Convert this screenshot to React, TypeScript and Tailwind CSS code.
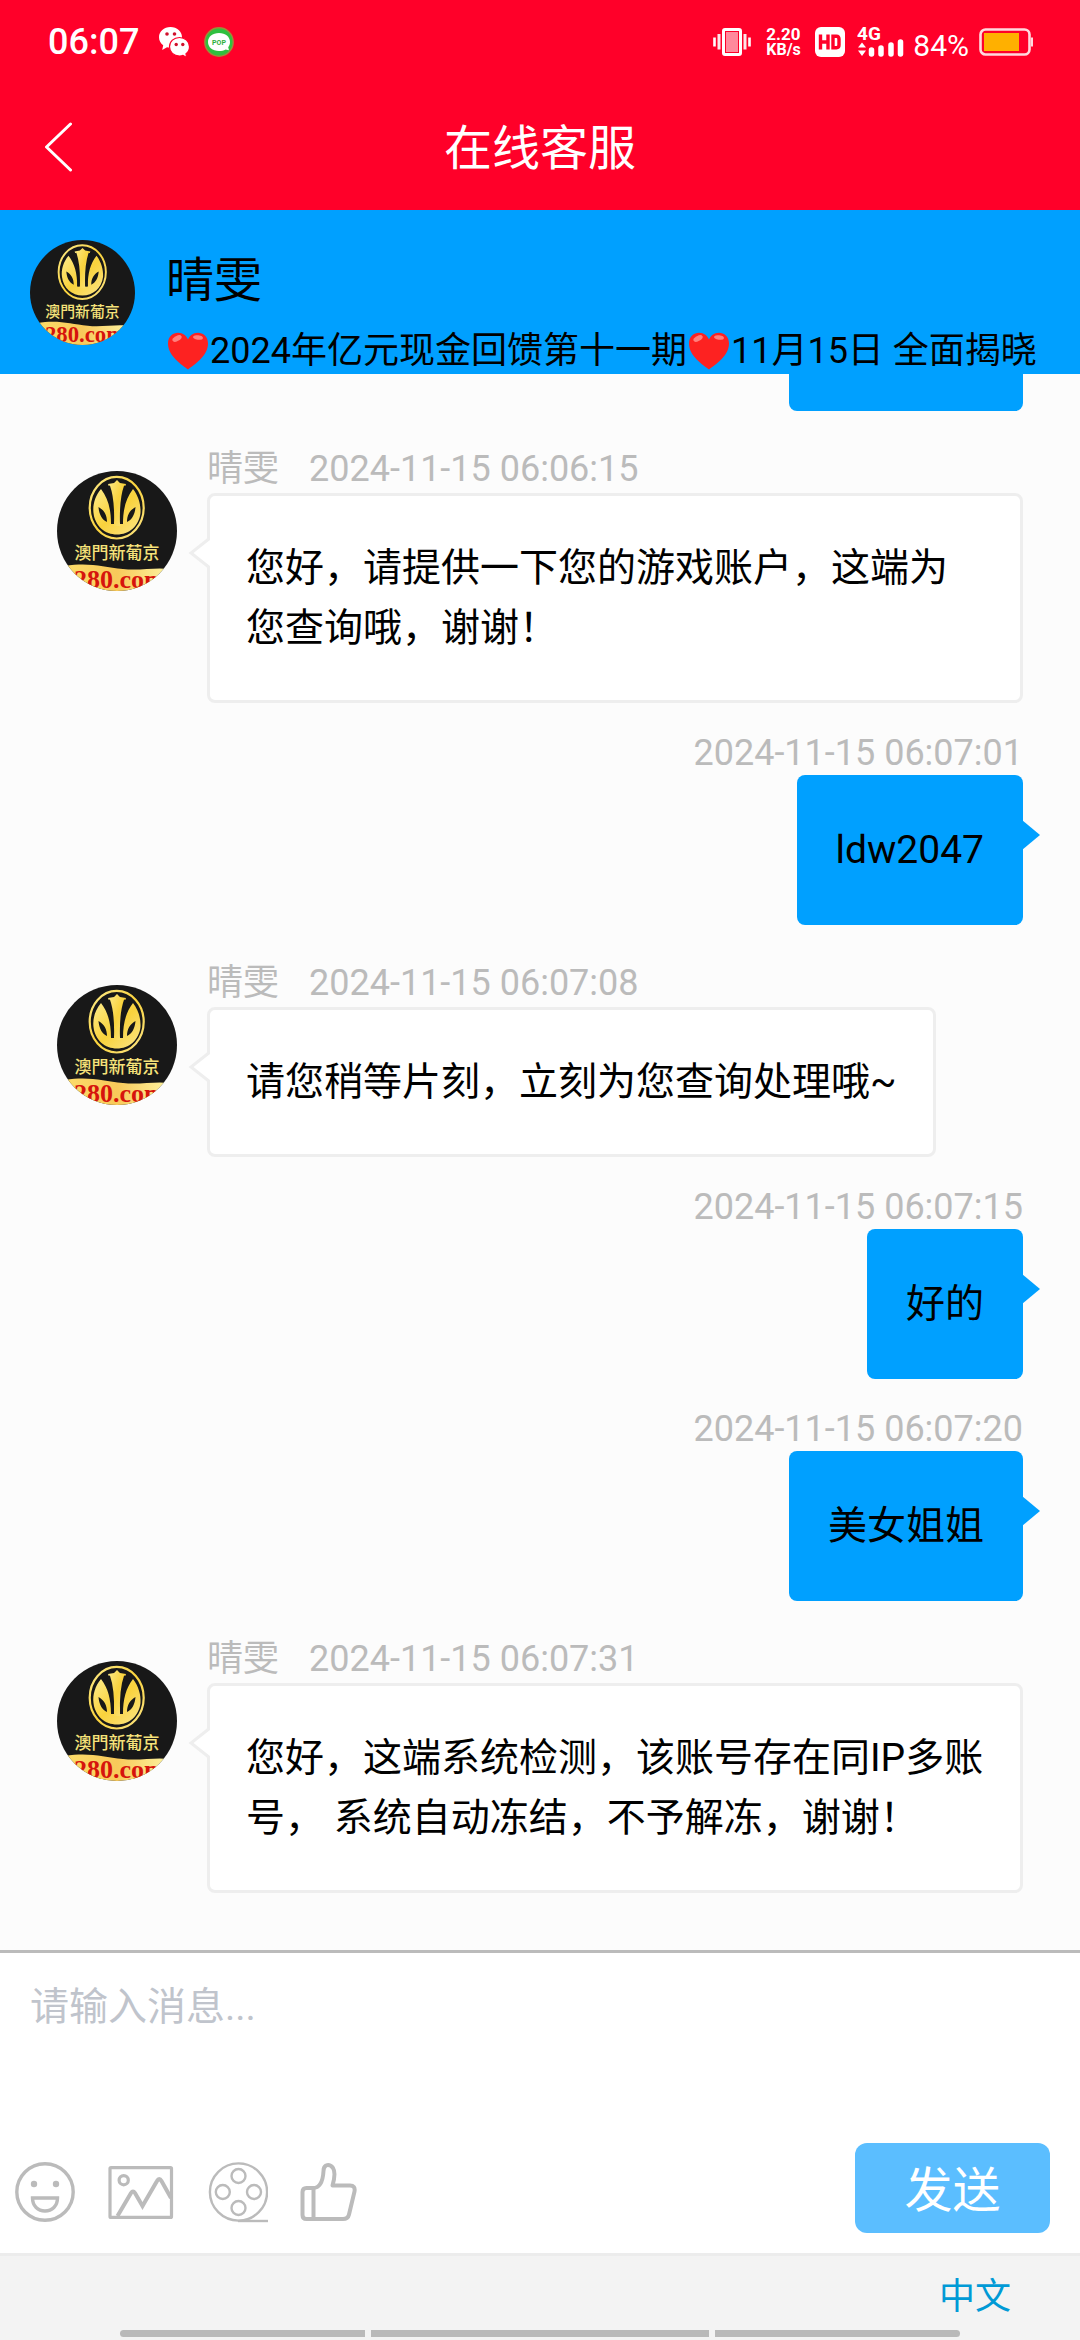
import { useState } from 'react';

type Message = {
  id: number;
  from: 'agent' | 'user';
  time: string;
  text: string;
};

const AGENT_NAME = '晴雯';

const messages: Message[] = [
  { id: 1, from: 'agent', time: '2024-11-15 06:06:15', text: '您好，请提供一下您的游戏账户，这端为您查询哦，谢谢！' },
  { id: 2, from: 'user', time: '2024-11-15 06:07:01', text: 'ldw2047' },
  { id: 3, from: 'agent', time: '2024-11-15 06:07:08', text: '请您稍等片刻，立刻为您查询处理哦~' },
  { id: 4, from: 'user', time: '2024-11-15 06:07:15', text: '好的' },
  { id: 5, from: 'user', time: '2024-11-15 06:07:20', text: '美女姐姐' },
  { id: 6, from: 'agent', time: '2024-11-15 06:07:31', text: '您好，这端系统检测，该账号存在同IP多账号， 系统自动冻结，不予解冻，谢谢！' },
];

function Avatar({ className }: { className: string }) {
  return (
    <svg viewBox="0 0 120 120" className={`shrink-0 rounded-full ${className}`} role="img" aria-label={AGENT_NAME}>
      <defs>
        <linearGradient id="gold" x1="0" y1="0" x2="1" y2="1">
          <stop offset="0" stopColor="#fdeb8a" />
          <stop offset="0.5" stopColor="#f9d23c" />
          <stop offset="1" stopColor="#fbe587" />
        </linearGradient>
        <linearGradient id="band" x1="0" y1="0" x2="1" y2="0">
          <stop offset="0" stopColor="#fbdc6a" />
          <stop offset="0.5" stopColor="#f8c95a" />
          <stop offset="1" stopColor="#fdf3a0" />
        </linearGradient>
      </defs>
      <rect width="120" height="120" fill="#181818" />
      <ellipse cx="59.7" cy="36.7" rx="27" ry="30.8" fill="none" stroke="url(#gold)" strokeWidth="2.2" />
      {/* tulip: two outer petals joined at the bowl, one in the middle */}
      <path
        d="M44 18 C38 25 35.5 34 36.5 42 C38 55 48 63.5 60 63.5 C72 63.5 82 55 83.5 42 C84 34 81.5 25 76 18 C69 27 66 38 66 53 L54 53 C54 38 51 27 44 18Z"
        fill="url(#gold)"
      />
      <path d="M60 9 L63 12 L69 13 C65 23 63.5 35 63.5 55 L56.5 55 C56.5 35 55 23 51 13 L57 12Z" fill="url(#gold)" />
      <path d="M51.500 15 C55.500 26 56 38 55.500 53 M68.500 15 C64.500 26 64 38 64.500 53" fill="none" stroke="#181818" strokeWidth="3" />
      <path d="M41.5 36 C47 39 50 44 50 51 C45 49 42 43 41.5 36Z M78.5 36 C73 39 70 44 70 51 C75 49 78 43 78.5 36Z" fill="#181818" />
      <text x="60" y="88" textAnchor="middle" fontSize="17" fontWeight="500" fill="#f5e27a" fontFamily="'Noto Sans CJK TC', sans-serif">
        澳門新葡京
      </text>
      <path d="M8 95 C32 91 46 96 66 98 C82 100 98 96 112 98 L112 120 L8 120Z" fill="url(#band)" />
      <text x="17" y="117" fontSize="26" fontWeight="700" fill="#d6140c" fontFamily="'Liberation Serif', serif">
        280.com
      </text>
    </svg>
  );
}

function Heart() {
  return (
    <svg viewBox="0 0 42 38" className="h-[38px] w-11 shrink-0" role="img" aria-label="❤️">
      <path
        d="M21 37.5 C15 33 1 24 1 11.5 C1 4.5 6 .8 11 .8 C16 .8 19.5 4 21 7.5 C22.500 4 26 .8 31 .8 C36 .8 41 4.500 41 11.500 C41 24 27 33 21 37.500Z"
        fill="#fd2221"
      />
      <ellipse cx="10" cy="6.500" rx="5" ry="2.600" fill="#ff7f7c" transform="rotate(-28 10 6.500)" />
      <ellipse cx="31" cy="5.500" rx="5" ry="2.200" fill="#ff7f7c" transform="rotate(8 31 5.500)" />
    </svg>
  );
}

function StatusBar() {
  return (
    <div className="flex h-[84px] items-center pl-12 pr-[47px] text-white">
      <span className="text-[36px] leading-none font-medium">06:07</span>
      {/* WeChat */}
      <svg viewBox="0 0 31 31" className="ml-5 size-[31px]" aria-hidden="true">
        <path d="M11.500 0 C5 0 0 4.500 0 10.200 C0 13.500 1.700 16.300 4.200 18.200 L3.200 23 L8 20.200 C9.500 20.600 11 20.500 11.500 20.400 C18 20 23 16 23 10.200 C23 4.500 18 0 11.500 0Z" fill="#fff" />
        <path d="M20.500 10.500 C14.800 10.500 10.500 14.500 10.500 19.800 C10.500 25 14.800 29 20.500 29 C21.800 29 23 28.800 24 28.400 L27.500 30.500 L27 26.800 C29.200 25.200 30.500 22.600 30.500 19.800 C30.500 14.500 26 10.500 20.500 10.500Z" fill="#fff" stroke="#ff0029" strokeWidth="1.200" />
        <circle cx="8" cy="7" r="1.800" fill="#d0102c" />
        <circle cx="15.500" cy="7" r="1.800" fill="#d0102c" />
        <circle cx="17.200" cy="17.500" r="1.700" fill="#d0102c" />
        <circle cx="23.800" cy="17.500" r="1.700" fill="#d0102c" />
      </svg>
      <svg viewBox="0 0 30 30" className="ml-3.5 size-[30px]" aria-label="POP">
        <circle cx="15" cy="15" r="14.200" fill="#2fc03f" stroke="#a08a3a" strokeWidth="1.400" />
        <path d="M15 6 C8.500 6 4 9.800 4 15 C4 20.200 8.500 24 15 24 C17.500 24 19.800 23.400 21.600 22.400 L25 23.200 L24.200 20.200 C25.400 18.700 26 17 26 15 C26 9.800 21.500 6 15 6Z" fill="#fff" />
        <text x="15" y="17.600" textAnchor="middle" fontSize="7" fontWeight="700" fill="#2fb03c">
          POP
        </text>
      </svg>
      <div className="ml-auto flex items-center">
        <svg viewBox="0 0 38 28" className="h-7 w-[38px]" aria-hidden="true">
          <rect x="10.500" y="1.500" width="17" height="25" rx="1.500" fill="none" stroke="#fff" strokeWidth="3" />
          <rect x="13" y="4" width="12" height="20" fill="#ff8a9c" />
          <path d="M1.500 9.500V18.500 M36.500 9.500V18.500" stroke="#fff" strokeWidth="2.600" />
          <path d="M6 6V21.500 M32 6V21.500" stroke="#ffe4e8" strokeWidth="3" />
        </svg>
        <div className="ml-[15px] w-9 text-[17px] leading-4 font-bold">
          <div>2.20</div>
          <div className="text-[16px]">KB/s</div>
        </div>
        <svg viewBox="0 0 30 30" className="ml-[13px] size-[30px]" aria-label="HD">
          <rect width="30" height="30" rx="6" fill="#fff" />
          <path d="M5.500 7.500V22.500 M13 7.500V22.500 M5.500 15H13 M18 9.300V20.700 H21.500 Q24 20.700 24 18 V12 Q24 9.300 21.500 9.300Z" fill="none" stroke="#ff0029" strokeWidth="3.400" />
        </svg>
        <svg viewBox="0 -6 48 44" className="ml-3 h-11 w-12" aria-label="4G">
          <text x="0" y="14" fontSize="19" fontWeight="700" fill="#fff">
            4G
          </text>
          <path d="M1 21.500L5 16.500L9 21.500Z M1 24.500L5 30L9 24.500Z" fill="#fff" />
          <path d="M14.500 24V28 M24 22V28 M34 19V28 M43.500 16V28" stroke="#fff" strokeWidth="5.500" strokeLinecap="round" />
        </svg>
        <span className="ml-2 pt-2 text-[30px] leading-none">84%</span>
        <svg viewBox="0 0 54 28" className="ml-2.5 h-7 w-[54px]" aria-hidden="true">
          <rect x="1.500" y="1.500" width="49" height="25" rx="5" fill="none" stroke="#ffd9de" strokeWidth="2.600" />
          <rect x="5" y="5" width="35" height="18" fill="#ffb000" />
          <path d="M53 9.500V18.500" stroke="#ffd9de" strokeWidth="2" />
        </svg>
      </div>
    </div>
  );
}

function AgentMessage({ message }: { message: Message }) {
  return (
    <article className="mt-[34px] flex pr-[57px] pl-[57px]">
      <Avatar className="mt-[26px] size-[120px]" />
      <div className="ml-[30px] min-w-0">
        <div className="flex gap-[30px] text-[36px] leading-[48px] text-[#bbb]">
          <span>{AGENT_NAME}</span>
          <time>{message.time}</time>
        </div>
        <div className="relative w-fit rounded-lg border-3 border-[#eee] bg-white px-9 py-[42px] text-[39px] leading-[60px] text-black">
          <svg viewBox="0 0 22 34" className="absolute top-10 -left-[22px] h-[34px] w-[22px]" aria-hidden="true">
            <path d="M22 2L3 17L22 32" fill="#fff" stroke="#eee" strokeWidth="3" />
          </svg>
          {message.text}
        </div>
      </div>
    </article>
  );
}

function UserMessage({ message }: { message: Message }) {
  return (
    <article className="mt-7 flex flex-col items-end pr-[57px] pl-[207px]">
      <time className="text-[36px] leading-[44px] text-[#bbb]">{message.time}</time>
      <div className="relative rounded-lg bg-[#00a0ff] px-[39px] py-[45px] text-[39px] leading-[60px] text-black">
        {message.text}
        <svg viewBox="0 0 18 30" className="absolute top-[45px] -right-[17px] h-[30px] w-[18px]" aria-hidden="true">
          <path d="M0 0L18 15L0 30Z" fill="#00a0ff" />
        </svg>
      </div>
    </article>
  );
}

function Composer() {
  const [draft, setDraft] = useState('');

  return (
    <form className="border-t-3 border-[#bbb] bg-white" onSubmit={(e) => e.preventDefault()}>
      <textarea
        aria-label="请输入消息"
        placeholder="请输入消息..."
        value={draft}
        onChange={(e) => setDraft(e.target.value)}
        className="block h-[190px] w-full resize-none px-[30px] pt-6 text-[39px] leading-[60px] text-black outline-none placeholder:text-[#c0c4cc]"
      />
      <div className="flex justify-between pr-[30px] pb-5 pl-[15px]">
        <div className="flex items-center gap-8 pt-2">
          <button type="button" aria-label="表情">
            <svg viewBox="0 0 61 60" className="h-[60px] w-[61px]" fill="none" stroke="#bbb" strokeWidth="3.400">
              <circle cx="30" cy="30" r="28.200" />
              <circle cx="19" cy="22" r="3.200" fill="#bbb" stroke="none" />
              <circle cx="41" cy="22" r="3.200" fill="#bbb" stroke="none" />
              <path d="M17.500 36 H42.500 C42.500 44 37 49 30 49 C23 49 17.500 44 17.500 36Z" />
            </svg>
          </button>
          <button type="button" aria-label="图片">
            <svg viewBox="0 0 68 53" className="h-[53px] w-[68px]" fill="none" stroke="#bbb" strokeWidth="3.200">
              <rect x="2" y="1.600" width="61.500" height="49.800" rx="1" />
              <circle cx="15.700" cy="14.200" r="4.600" strokeWidth="3.200" />
              <path d="M9.500 50 L23 27 Q25 24 27 27 L34.500 40 L49 15 Q51.200 11 53.500 15 L63 32" strokeWidth="4" />
            </svg>
          </button>
          <button type="button" aria-label="视频">
            <svg viewBox="0 0 60 61" className="h-[61px] w-[60px]" fill="none" stroke="#bbb" strokeWidth="2.400">
              <circle cx="30.500" cy="30" r="28.600" />
              <circle cx="30.500" cy="14" r="7" />
              <circle cx="14.800" cy="30" r="7" />
              <circle cx="46" cy="30" r="7" />
              <circle cx="30.500" cy="46" r="7" />
              <path d="M30 59H60" />
            </svg>
          </button>
          <button type="button" aria-label="点赞">
            <svg viewBox="0 0 57 58" className="h-[58px] w-[57px]" fill="none" stroke="#bbb" strokeWidth="4" strokeLinejoin="round">
              <path d="M13 25 H6.500 Q2.500 25 2.500 29 V52 Q2.500 56 6.500 56 H43 Q48 56 49 51.500 L54.500 28.500 Q55.500 22.500 50 22.500 H32.500 C35 14 35.500 9 33 5 Q30 1 26 2.500 Q23.500 4 23.500 8 C23 17 21 25 13 25Z" />
              <path d="M13.500 25V56" />
            </svg>
          </button>
        </div>
        <button type="submit" className="h-[90px] w-[195px] rounded-xl bg-[#5bbeff] pt-1.5 text-[48px] leading-none text-white">
          发送
        </button>
      </div>
    </form>
  );
}

export default function App() {
  return (
    <div className="flex min-h-screen flex-col bg-[#fcfcfc] font-['Roboto','Noto_Sans_CJK_SC',sans-serif]">
      <header className="bg-[#ff0029] text-white">
        <StatusBar />
        <nav className="grid h-[126px] grid-cols-[1fr_auto_1fr] items-center">
          <button type="button" aria-label="返回" className="ml-11 w-fit">
            <svg viewBox="0 0 28 50" className="h-[50px] w-7" fill="none" stroke="#fff" strokeWidth="3" strokeLinecap="round" strokeLinejoin="round">
              <path d="M26.500 2L2.500 25L26.500 48" />
            </svg>
          </button>
          <h1 className="pt-1 text-[48px] leading-none">在线客服</h1>
        </nav>
      </header>

      <section className="flex h-[164px] gap-[31px] overflow-hidden bg-[#00a0ff] pl-[30px] text-black">
        <Avatar className="mt-[30px] size-[105px]" />
        <div className="pt-[38px]">
          <h2 className="text-[48px] leading-[66px]">{AGENT_NAME}</h2>
          <p className="mt-2.5 flex items-center text-[36px] leading-[54px] whitespace-nowrap">
            <Heart />
            2024年亿元现金回馈第十一期
            <Heart />
            11月15日 全面揭晓
          </p>
        </div>
      </section>

      <main className="grow pb-[57px]">
        {/* tail of the previous bubble, scrolled under the banner */}
        <div className="mr-[57px] ml-auto h-[37px] w-[234px] rounded-b-lg bg-[#00a0ff]" />
        {messages.map((message) =>
          message.from === 'agent' ? (
            <AgentMessage key={message.id} message={message} />
          ) : (
            <UserMessage key={message.id} message={message} />
          )
        )}
      </main>

      <Composer />

      <footer className="border-t-3 border-[#ececec] bg-[#f3f3f3] pb-[3px]">
        <div className="flex h-[74px] justify-end pr-[69px]">
          <a href="#lang" className="pt-2 text-[36px] leading-[66px] text-[#009ad6]">
            中文
          </a>
        </div>
        <div className="mx-[120px] flex h-[7px] gap-1.5">
          <div className="w-[245px] rounded-l-full bg-[#b9b9b9]" />
          <div className="grow bg-[#b9b9b9]" />
          <div className="w-[245px] rounded-r-full bg-[#b9b9b9]" />
        </div>
      </footer>
    </div>
  );
}
